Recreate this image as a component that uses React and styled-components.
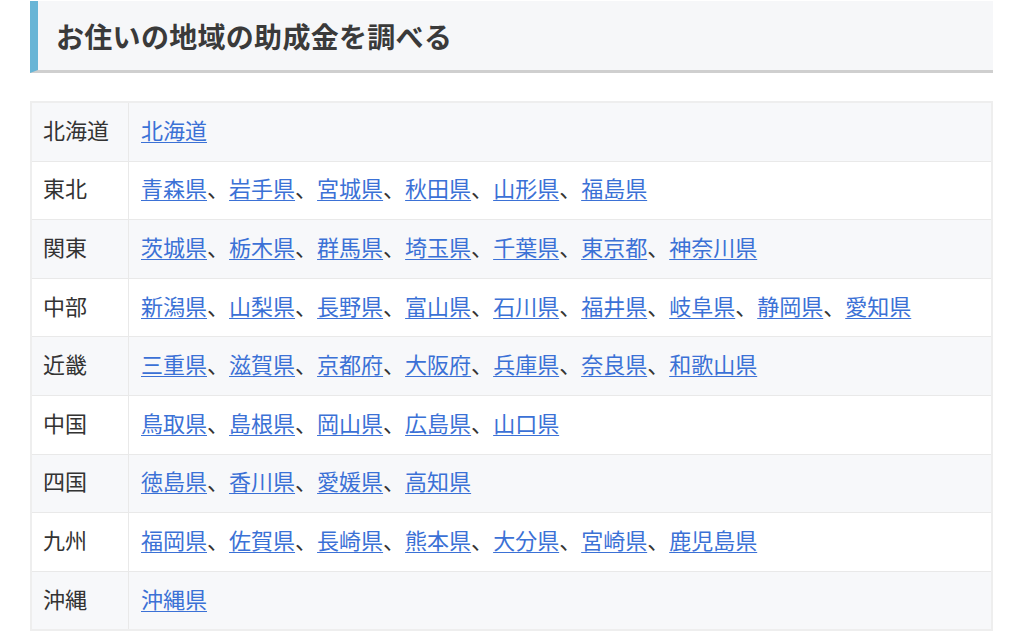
import React from 'react'
import styled, { createGlobalStyle } from 'styled-components'

const GlobalStyle = createGlobalStyle`
  body {
    margin: 0;
    background: #fff;
    font-family: "Noto Sans CJK JP", "Noto Sans", sans-serif;
    color: #333;
  }
`

const Page = styled.div`
  width: 963px;
  padding: 1px 0 0 30px;
`

const Heading = styled.h2`
  margin: 0;
  height: 69px;
  display: flex;
  align-items: center;
  padding-left: 18px;
  background: #f6f7f9;
  border-left: 8px solid #68b5d6;
  border-bottom: 3px solid #cfcfcf;
  font-size: 28px;
  font-weight: 700;
  color: #3a3a3a;
  letter-spacing: 0.3px;
`

const Table = styled.table`
  margin-top: 28px;
  width: 100%;
  border-collapse: collapse;
  border: 2px solid #eeeeee;
  font-size: 22px;
  line-height: 1.5;
`

const Row = styled.tr`
  background: ${props => (props.$striped ? '#f7f8fa' : '#fff')};
`

const Area = styled.td`
  width: 72px;
  height: 52.6px;
  padding: 0 13px 5px 11px;
  border: 1px solid #e9e9e9;
  color: #333;
  white-space: nowrap;
`

const Prefs = styled.td`
  padding: 0 12px 5px 12px;
  border: 1px solid #e9e9e9;
  color: #333;
`

const Pref = styled.a`
  color: #3b71d6;
  text-decoration: underline;
  text-underline-offset: 3px;
  text-decoration-thickness: 1px;
`

const regions = [
  ['北海道', ['北海道']],
  ['東北', ['青森県', '岩手県', '宮城県', '秋田県', '山形県', '福島県']],
  ['関東', ['茨城県', '栃木県', '群馬県', '埼玉県', '千葉県', '東京都', '神奈川県']],
  ['中部', ['新潟県', '山梨県', '長野県', '富山県', '石川県', '福井県', '岐阜県', '静岡県', '愛知県']],
  ['近畿', ['三重県', '滋賀県', '京都府', '大阪府', '兵庫県', '奈良県', '和歌山県']],
  ['中国', ['鳥取県', '島根県', '岡山県', '広島県', '山口県']],
  ['四国', ['徳島県', '香川県', '愛媛県', '高知県']],
  ['九州', ['福岡県', '佐賀県', '長崎県', '熊本県', '大分県', '宮崎県', '鹿児島県']],
  ['沖縄', ['沖縄県']]
]

const App = () => {
  return (
    <Page>
      <GlobalStyle />
      <Heading>お住いの地域の助成金を調べる</Heading>
      <Table>
        <tbody>
          {regions.map(([area, prefs], i) => (
            <Row key={area} $striped={i % 2 === 0}>
              <Area>{area}</Area>
              <Prefs>
                {prefs.map((p, j) => (
                  <React.Fragment key={p}>
                    {j > 0 && '、'}
                    <Pref href="#">{p}</Pref>
                  </React.Fragment>
                ))}
              </Prefs>
            </Row>
          ))}
        </tbody>
      </Table>
    </Page>
  )
}

export default App
